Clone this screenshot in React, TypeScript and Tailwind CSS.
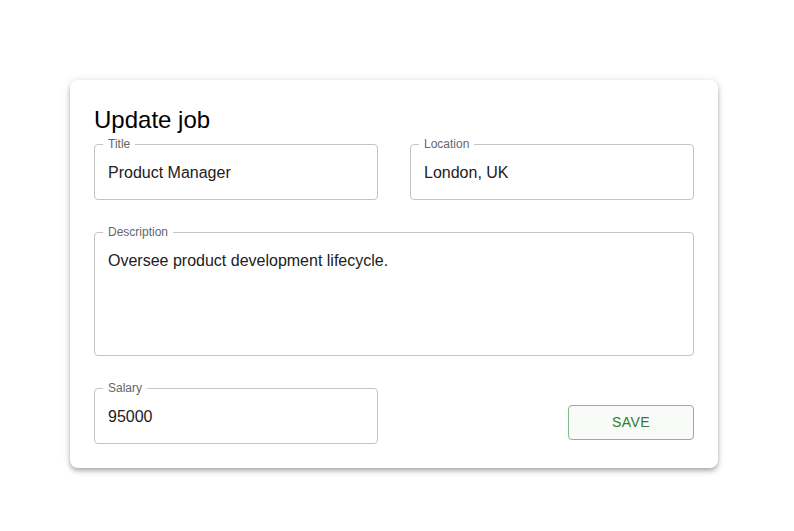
import React from "react";

function Field({
  label,
  value,
  multiline = false,
}: {
  label: string;
  value: string;
  multiline?: boolean;
}) {
  return (
    <div className={`relative rounded-[4px] border border-[#c4c4c4] ${multiline ? "h-[124px]" : "h-[56px]"}`}>
      <span className="absolute -top-[8px] left-[8px] bg-white px-[5px] text-[12px] leading-[15px] text-[#666666]">
        {label}
      </span>
      <div
        className={`px-[13px] text-[16px] text-[#212121] ${
          multiline ? "pt-[16px] leading-[23px]" : "flex h-full items-center leading-[23px]"
        }`}
      >
        {value}
      </div>
    </div>
  );
}

export default function App() {
  return (
    <div className="min-h-[531px] bg-white pl-[70px] pt-[80px] font-['Liberation_Sans',Arial,sans-serif]">
      <div className="w-[648px] rounded-[8px] bg-white p-6 shadow-[0_2px_4px_-1px_rgba(0,0,0,0.2),0_4px_5px_0_rgba(0,0,0,0.14),0_1px_10px_0_rgba(0,0,0,0.12)]">
        <h2 className="mb-2 text-[24px] leading-[32px] text-black">Update job</h2>
        <div className="grid grid-cols-2 gap-x-8 gap-y-8">
          <Field label="Title" value="Product Manager" />
          <Field label="Location" value="London, UK" />
          <div className="col-span-2">
            <Field label="Description" value="Oversee product development lifecycle." multiline />
          </div>
          <Field label="Salary" value="95000" />
          <div className="flex items-end justify-end pb-[4px]">
            <button className="h-[35px] w-[126px] rounded-[4px] border border-[#86ba88] bg-[#f8fbf8] text-[14px] tracking-[0.4px] text-[#2e7d32]">
              SAVE
            </button>
          </div>
        </div>
      </div>
    </div>
  );
}
